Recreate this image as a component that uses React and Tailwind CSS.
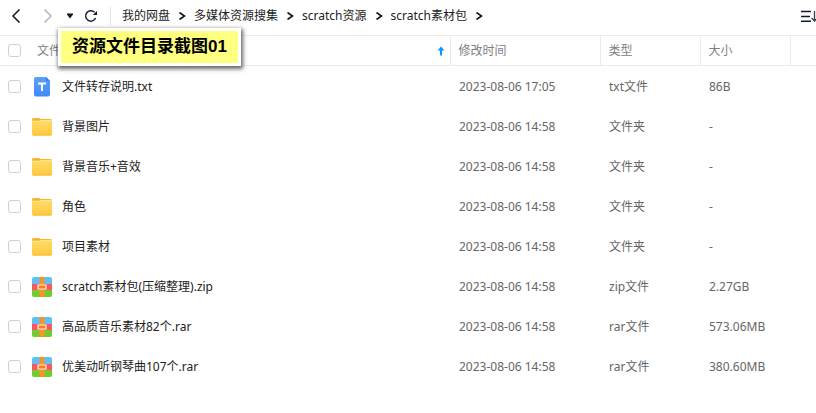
import React, { useState } from "react";

const crumbs = ["我的网盘", "多媒体资源搜集", "scratch资源", "scratch素材包"];

const files = [
  { name: "文件转存说明.txt", kind: "text", time: "2023-08-06 17:05", type: "txt文件", size: "86B" },
  { name: "背景图片", kind: "folder", time: "2023-08-06 14:58", type: "文件夹", size: "-" },
  { name: "背景音乐+音效", kind: "folder", time: "2023-08-06 14:58", type: "文件夹", size: "-" },
  { name: "角色", kind: "folder", time: "2023-08-06 14:58", type: "文件夹", size: "-" },
  { name: "项目素材", kind: "folder", time: "2023-08-06 14:58", type: "文件夹", size: "-" },
  { name: "scratch素材包(压缩整理).zip", kind: "archive", time: "2023-08-06 14:58", type: "zip文件", size: "2.27GB" },
  { name: "高品质音乐素材82个.rar", kind: "archive", time: "2023-08-06 14:58", type: "rar文件", size: "573.06MB" },
  { name: "优美动听钢琴曲107个.rar", kind: "archive", time: "2023-08-06 14:58", type: "rar文件", size: "380.60MB" },
];

function TextIcon() {
  return (
    <svg viewBox="0 0 20 20" className="h-5 w-5 shrink-0" aria-hidden="true">
      <defs>
        <linearGradient id="text-bg" x1="0" y1="0" x2="0" y2="1">
          <stop offset="0" stopColor="#5c9ffb" />
          <stop offset="1" stopColor="#3f8af6" />
        </linearGradient>
      </defs>
      <path d="M4 0h10l4 4v13.500a2 2 0 0 1-2 2H4a2 2 0 0 1-2-2V2a2 2 0 0 1 2-2z" fill="url(#text-bg)" />
      <path d="M14 0l4 4h-3a1 1 0 0 1-1-1z" fill="#2f7cf0" />
      <path d="M6 6.500h8M10 6.500V14" stroke="#fff" strokeWidth="2" fill="none" />
    </svg>
  );
}

function FolderIcon() {
  return (
    <svg viewBox="0 0 20 20" className="h-5 w-5 shrink-0" aria-hidden="true">
      <defs>
        <linearGradient id="folder-bg" x1="0" y1="0" x2="0" y2="1">
          <stop offset="0" stopColor="#ffdc6a" />
          <stop offset="1" stopColor="#ffc93c" />
        </linearGradient>
      </defs>
      <path d="M0 2.500A1.500 1.500 0 0 1 1.500 1H7l2 1h9.500A1.500 1.500 0 0 1 20 3.500V10H0z" fill="#f7b52c" />
      <path d="M0 4.500A1 1 0 0 1 1 3.700h7l1.500-.7H19a1 1 0 0 1 1 1V17a1.500 1.500 0 0 1-1.500 1.500h-17A1.500 1.500 0 0 1 0 17z" fill="url(#folder-bg)" />
      <path d="M.5 4.300H8l1.500-.8h10" stroke="#ffe694" strokeWidth=".8" fill="none" />
      <path d="M.7 18h18.600" stroke="#f3b32b" strokeWidth=".8" fill="none" />
    </svg>
  );
}

function ArchiveIcon() {
  return (
    <svg viewBox="0 0 20 20" className="h-5 w-5 shrink-0" aria-hidden="true">
      <path d="M2 0h16a2 2 0 0 1 2 2v5H0V2a2 2 0 0 1 2-2z" fill="#5fc0f7" />
      <path d="M0 7h20v6H0z" fill="#f8575c" />
      <path d="M0 13h20v5a2 2 0 0 1-2 2H2a2 2 0 0 1-2-2z" fill="#72cb31" />
      <path d="M7.500 0h5v20h-5z" fill="#fb9426" />
      <path d="M6 8h8v4H6z" fill="#fb7e24" stroke="#fff3df" strokeWidth="1.200" />
    </svg>
  );
}

const icons = { text: TextIcon, folder: FolderIcon, archive: ArchiveIcon };

function Chevron({ flip, className }) {
  return (
    <svg viewBox="0 0 10 14" className={className} fill="none" stroke="currentColor" aria-hidden="true">
      <path d={flip ? "M8.500.5 2 7l6.500 6.500" : "M1.500.5 8 7l-6.500 6.500"} strokeWidth="1.500" />
    </svg>
  );
}

function Checkbox({ id, label }) {
  return (
    <input
      id={id}
      type="checkbox"
      aria-label={label}
      className="h-[13px] w-[13px] shrink-0 appearance-none rounded-[3px] border border-[#cfcfcf] bg-white checked:border-[#06a7ff] checked:bg-[#06a7ff]"
    />
  );
}

function Toolbar() {
  return (
    <header className="flex h-[35px] items-center pb-[3px] text-[#222]">
      <button type="button" aria-label="后退" className="ml-[11px] text-[#111827]">
        <Chevron flip className="h-[14px] w-[10px]" />
      </button>
      <button type="button" aria-label="前进" className="ml-[22px] text-[#b8b8b8]">
        <Chevron className="h-[14px] w-[10px]" />
      </button>
      <button type="button" aria-label="历史" className="ml-[13px]">
        <svg viewBox="0 0 8 6" className="h-[6px] w-[8px]" aria-hidden="true">
          <path d="M1 .5h6v1L4 5.500 1 1.500z" fill="#111827" />
        </svg>
      </button>
      <button type="button" aria-label="刷新" className="ml-[10px]">
        <svg viewBox="0 0 14 14" className="h-[14px] w-[14px]" fill="none" aria-hidden="true">
          <path d="M10.500 3.300A5.200 5.200 0 1 0 11.600 9" stroke="#111827" strokeWidth="1.400" />
          <path d="M13 2v4H8.800z" fill="#111827" />
        </svg>
      </button>
      <span className="ml-3 h-[18px] w-px bg-[#e3e3e3]" />
      <nav aria-label="路径" className="ml-[11px] flex items-center gap-2">
        {crumbs.map((crumb) => (
          <React.Fragment key={crumb}>
            <a href="#" className="whitespace-nowrap">
              {crumb}
            </a>
            <svg viewBox="0 0 8 8" className="h-2 w-2" fill="none" aria-hidden="true">
              <path d="M1.500 .5 6.500 4 1.500 7.500" stroke="#111" strokeWidth="1.600" />
            </svg>
          </React.Fragment>
        ))}
      </nav>
      <button type="button" aria-label="排序" className="ml-auto w-[15px] overflow-hidden">
        <svg viewBox="0 0 18 12" className="h-[12px] w-[18px] max-w-none" fill="none" aria-hidden="true">
          <path d="M0 1.500h10M0 6.500h9M0 11.200h10" stroke="#111827" strokeWidth="1.500" />
          <path d="M13.500 1v9.500M10.500 8l3 3 3-3" stroke="#374151" strokeWidth="1.300" />
        </svg>
      </button>
    </header>
  );
}

function App() {
  const [ascending, setAscending] = useState(true);

  return (
    <main className="relative min-h-screen bg-white font-['Noto_Sans','Noto_Sans_CJK_SC',sans-serif] text-[12px] leading-4">
      <Toolbar />

      <table className="w-full table-fixed border-collapse text-left text-[#666]">
        <colgroup>
          <col />
          <col className="w-[150px]" />
          <col className="w-[100px]" />
          <col className="w-[90px]" />
          <col className="w-[26px]" />
        </colgroup>
        <thead>
          <tr className="h-[30px] border-y border-[#ebebeb] text-[#808080]">
            <th className="border-r border-[#ebebeb] p-0 font-normal">
              <div className="flex items-center pl-2">
                <Checkbox id="all" label="全选" />
                <span className="ml-4">文件名</span>
                <button
                  type="button"
                  aria-label="按文件名排序"
                  onClick={() => setAscending(!ascending)}
                  className="mr-[5px] ml-auto"
                >
                  <svg viewBox="0 0 8 10" className={ascending ? "h-[10px] w-2" : "h-[10px] w-2 rotate-180"} aria-hidden="true">
                    <path d="M4 .5 7.500 4.500H5V9.500H3V4.500H.5z" fill="#0a96ff" />
                  </svg>
                </button>
              </div>
            </th>
            <th className="border-r border-[#ebebeb] py-0 pl-2 font-normal">修改时间</th>
            <th className="border-r border-[#ebebeb] py-0 pl-2 font-normal">类型</th>
            <th className="border-r border-[#ebebeb] py-0 pl-2 font-normal">大小</th>
            <td />
          </tr>
        </thead>
        <tbody>
          {files.map((file, index) => {
            const Icon = icons[file.kind];
            return (
              <tr key={file.name} className="h-10 hover:bg-[#f5fafe]">
                <td className="px-0 pt-[2px] pb-0">
                  <div className="flex items-center pl-2">
                    <Checkbox id={`file-${index}`} label={file.name} />
                    <label htmlFor={`file-${index}`} className="ml-[11px] flex items-center gap-[10px] text-[#222]">
                      <Icon />
                      {file.name}
                    </label>
                  </div>
                </td>
                <td className="pt-[2px] pb-0 pl-[9px]">{file.time}</td>
                <td className="pt-[2px] pb-0 pl-[9px]">{file.type}</td>
                <td className="pt-[2px] pb-0 pl-[9px]">{file.size}</td>
                <td />
              </tr>
            );
          })}
        </tbody>
      </table>

      <div className="absolute top-[28px] left-[58px] border-3 border-white bg-[#ffff80] px-[11px] py-1 font-['Liberation_Sans','Noto_Sans_CJK_SC',sans-serif] text-[17px] leading-6 font-bold whitespace-nowrap text-black shadow-[1px_2px_4px_1px_rgba(0,0,0,0.6)]">
        资源文件目录截图01
      </div>
    </main>
  );
}

export default App;
